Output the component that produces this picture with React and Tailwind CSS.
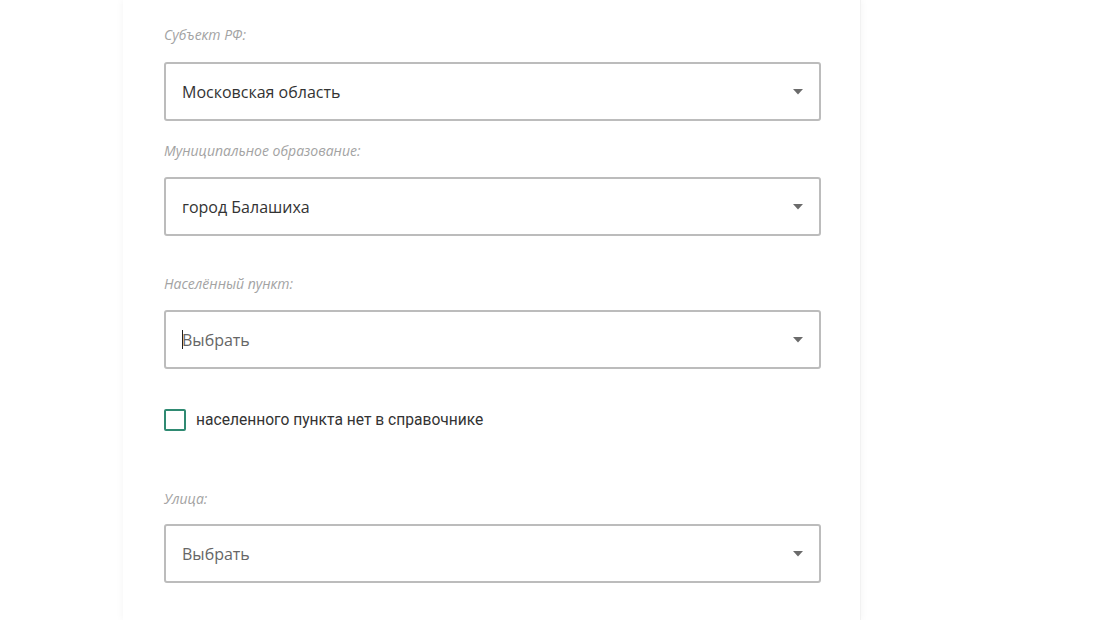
// Address form — region / municipality / locality / street selects.
const labelCls = "block text-[14px] leading-[18px] italic text-[#a3a3a3]"
const labelFont = { fontFamily: "'Open Sans', 'Liberation Sans', sans-serif" }
const font = { fontFamily: "'Roboto', 'Liberation Sans', sans-serif" }

function Caret() {
  return (
    <svg width="10" height="6" viewBox="0 0 10 6" className="shrink-0">
      <path d="M0 0h10L5 5.5z" fill="#6b6b6b" />
    </svg>
  )
}

function SelectBox({ value, placeholder, caret }) {
  return (
    <div className="flex h-[59px] w-[657px] items-center justify-between rounded-[3px] border-2 border-[#bcbcbc] bg-white pl-[16px] pr-[16px]">
      <span className="flex items-center text-[16px] font-['Open_Sans',sans-serif]">
        {caret && <span className="mr-[-1px] h-[19px] w-px bg-[#222]" />}
        {value ? (
          <span className="text-[#333]">{value}</span>
        ) : (
          <span className="text-[#666]">{placeholder}</span>
        )}
      </span>
      <Caret />
    </div>
  )
}

export default function App() {
  return (
    <div className="min-h-[620px] w-[1094px] overflow-hidden bg-white">
      <div className="ml-[123px] h-[620px] w-[738px] border-r border-[#f2f2f2] bg-white pl-[41px] pt-[26px] shadow-[0_0_8px_rgba(0,0,0,0.05)]">
        <label className={labelCls} style={labelFont}>Субъект РФ:</label>
        <div className="mt-[18px]">
          <SelectBox value="Московская область" />
        </div>

        <label className={`${labelCls} mt-[21px]`} style={labelFont}>Муниципальное образование:</label>
        <div className="mt-[17px]">
          <SelectBox value="город Балашиха" />
        </div>

        <label className={`${labelCls} mt-[39px]`} style={labelFont}>Населённый пункт:</label>
        <div className="mt-[17px]">
          <SelectBox placeholder="Выбрать" caret />
        </div>

        <div className="mt-[40px] flex h-[22px] items-center gap-[10px]">
          <span className="h-[22px] w-[22px] rounded-[2px] border-2 border-[#2f8a72] bg-white" />
          <span className="text-[15.6px] leading-[22px] text-[#333]" style={font}>населенного пункта нет в справочнике</span>
        </div>

        <label className={`${labelCls} mt-[59px]`} style={labelFont}>Улица:</label>
        <div className="mt-[16px]">
          <SelectBox placeholder="Выбрать" />
        </div>
      </div>
    </div>
  )
}
